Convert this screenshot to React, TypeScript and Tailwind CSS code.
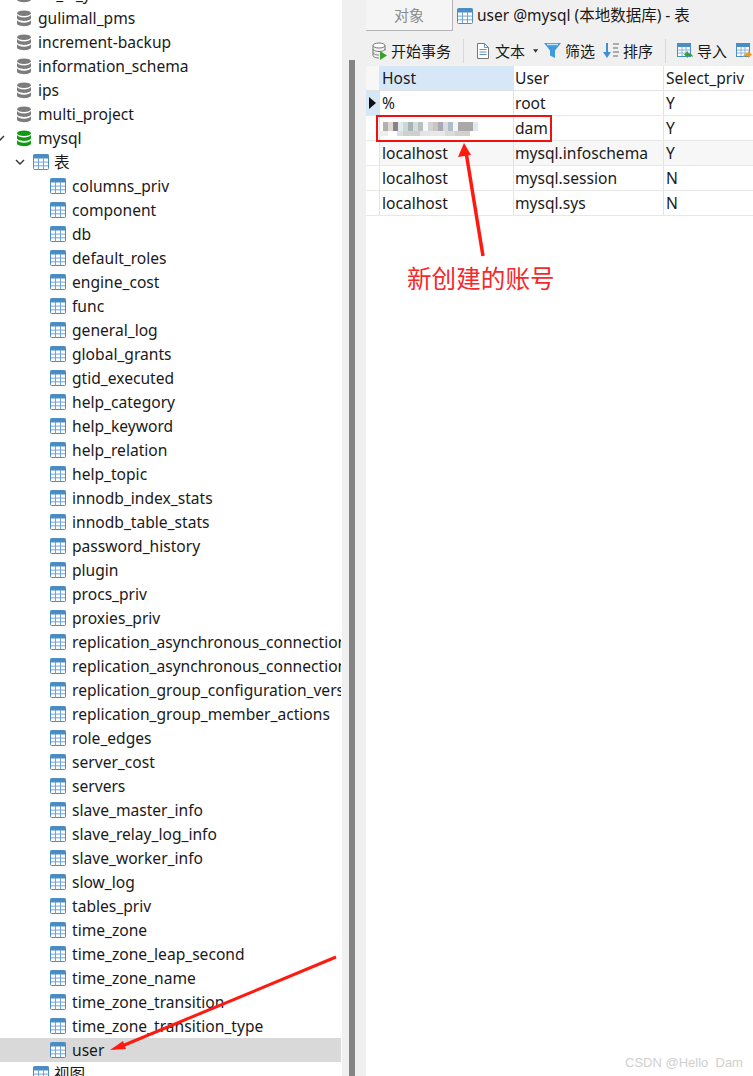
const font = { fontFamily: '"Noto Sans", "Noto Sans CJK SC", sans-serif' };

function Db({ green = false }: { green?: boolean }) {
  const c = green ? "#129a12" : "#7c7c7c";
  return (
    <svg width="16" height="17" viewBox="0 0 16 17" className="shrink-0">
      <ellipse cx="8" cy="3.200" rx="7" ry="2.800" fill={c} />
      <path d="M1 5c1 1.700 3.600 2.400 7 2.400s6-.7 7-2.400v3.300c0 1.500-3 2.600-7 2.600S1 9.800 1 8.300z" fill={c} />
      <path d="M1 10.300c1 1.700 3.600 2.400 7 2.400s6-.7 7-2.400v3.300c0 1.500-3 2.600-7 2.600s-7-1.100-7-2.600z" fill={c} />
    </svg>
  );
}

function Tbl({ size = 16 }: { size?: number }) {
  return (
    <svg width={size} height={size} viewBox="0 0 16 16" className="shrink-0">
      <rect x="0.500" y="0.500" width="15" height="15" rx="1" fill="#fff" stroke="#4a8cc4" />
      <rect x="0.500" y="0.500" width="15" height="4" fill="#4a8cc4" />
      <path d="M5.500 4v11.500M10.500 4v11.500M1 8.100h14M1 11.800h14" stroke="#6fa5d2" strokeWidth="1" fill="none" />
    </svg>
  );
}

function Chevron() {
  return (
    <svg width="10" height="7" viewBox="0 0 10 7" className="shrink-0">
      <path d="M1 1l4 4 4-4" stroke="#333" strokeWidth="1.400" fill="none" />
    </svg>
  );
}

const dbs = ["gulimall_pms", "increment-backup", "information_schema", "ips", "multi_project"];
const tables = [
  "columns_priv", "component", "db", "default_roles", "engine_cost", "func", "general_log", "global_grants",
  "gtid_executed", "help_category", "help_keyword", "help_relation", "help_topic", "innodb_index_stats",
  "innodb_table_stats", "password_history", "plugin", "procs_priv", "proxies_priv",
  "replication_asynchronous_connection_failover", "replication_asynchronous_connection_failover_managed",
  "replication_group_configuration_version", "replication_group_member_actions", "role_edges", "server_cost",
  "servers", "slave_master_info", "slave_relay_log_info", "slave_worker_info", "slow_log", "tables_priv",
  "time_zone", "time_zone_leap_second", "time_zone_name", "time_zone_transition", "time_zone_transition_type",
];

const rows = [
  { host: "%", user: "root", priv: "Y", bg: "bg-white" },
  { host: "", user: "dam", priv: "Y", bg: "bg-white" },
  { host: "localhost", user: "mysql.infoschema", priv: "Y", bg: "bg-[#f7f7f7]" },
  { host: "localhost", user: "mysql.session", priv: "N", bg: "bg-white" },
  { host: "localhost", user: "mysql.sys", priv: "N", bg: "bg-white" },
];

const mosaicTop = [
  [383, "#b0b4b0", 5], [388, "#e2d8d2", 5], [393, "#8c8088", 5], [398, "#e0ecec", 5], [403, "#c8d8d8", 5],
  [408, "#a8b4b4", 5], [413, "#d4dcdc", 5], [418, "#b8c0c0", 5], [423, "#f8f8f4", 5], [428, "#d0d4d8", 5],
  [433, "#cfc4b8", 5], [438, "#a8a8b8", 5], [443, "#d8dcdc", 5], [448, "#b0bcc8", 5], [453, "#f4f4f4", 5],
  [458, "#aaa8a8", 15], [473, "#dde8f2", 5],
] as [number, string, number][];
const mosaicBottom = [
  [378, "#eeeeee", 10], [397, "#dddddd", 6], [403, "#cfcfcf", 17], [420, "#e4e4e8", 10],
  [430, "#e8e8e8", 15], [445, "#d8dcd8", 10], [455, "#d0d0d0", 15],
] as [number, string, number][];

function Tool({ label, icon, className = "" }: { label: string; icon: React.ReactNode; className?: string }) {
  return (
    <div className={`flex items-center ${className}`}>
      {icon}
      <span className="pt-[2px] text-[15px] text-[#1a1a1a] whitespace-nowrap">{label}</span>
    </div>
  );
}

export default function App() {
  return (
    <div className="relative flex h-[1076px] w-[753px] overflow-hidden bg-white" style={font}>
      {/* tree */}
      <div className="h-full w-[341px] shrink-0 overflow-hidden bg-white text-[15.6px] text-[#1a1a1a]">
        <div className="-mt-[18px]">
          <div className="flex h-6 items-center gap-[6px] pl-[16px]">
            <Db />
            <span className="pt-[2px]">oa_ai_y</span>
          </div>
          {dbs.map((d) => (
            <div key={d} className="flex h-6 items-center gap-[6px] pl-[16px]">
              <Db />
              <span className="pt-[2px]">{d}</span>
            </div>
          ))}
          <div className="flex h-6 items-center pl-0">
            <div className="-ml-[5px] w-[21px]"><Chevron /></div>
            <div className="mr-[6px]"><Db green /></div>
            <span className="pt-[2px]">mysql</span>
          </div>
          <div className="flex h-6 items-center pl-[15px]">
            <div className="w-[18px]"><Chevron /></div>
            <Tbl />
            <span className="ml-[5px] pt-[2px]">表</span>
          </div>
          {tables.map((t) => (
            <div key={t} className="flex h-6 items-center pl-[50px]">
              <Tbl />
              <span className="ml-[6px] pt-[2px] whitespace-nowrap">{t}</span>
            </div>
          ))}
          <div className="flex h-6 items-center bg-[#d9d9d9] pl-[50px]">
            <Tbl />
            <span className="ml-[6px] pt-[2px]">user</span>
          </div>
          <div className="flex h-6 items-center pl-[33px]">
            <Tbl />
            <span className="ml-[5px] pt-[2px]">视图</span>
          </div>
        </div>
      </div>

      {/* splitter */}
      <div className="h-full w-[25px] shrink-0 border-l border-white bg-[#f0f0f0] pl-[7px] pt-[60px]">
        <div className="h-full w-[6px] bg-[#858585]" />
      </div>

      {/* main */}
      <div className="flex h-full min-w-0 flex-1 flex-col bg-white">
        <div className="flex h-[33px] shrink-0 bg-[#f0f0f0]">
          <div className="flex h-[31px] w-[87px] items-center justify-center border-r border-b border-[#b5b5b5] bg-[#f5f5f5] text-[15px] text-[#8c8c8c]">
            对象
          </div>
          <div className="flex h-[31px] items-center pl-[4px] text-[15.5px] text-[#1a1a1a] whitespace-nowrap">
            <Tbl />
            <span className="ml-[4px]">user @mysql (本地数据库) - 表</span>
          </div>
        </div>
        <div className="flex h-[33px] shrink-0 items-center bg-[#f0f0f0] pl-[6px] pt-[2px] whitespace-nowrap">
          <Tool
            className="gap-[3px]"
            label="开始事务"
            icon={
              <svg width="16" height="18" viewBox="0 0 16 18">
                <ellipse cx="7" cy="3.500" rx="6" ry="2.500" fill="#fff" stroke="#777" />
                <path d="M1 3.500v10c0 1.400 2.700 2.500 6 2.500M13 3.500v5M1 7c0 1.400 2.700 2.500 6 2.500s6-1.100 6-2.500M1 10.500c0 1.400 2.700 2.500 6 2.500" fill="none" stroke="#777" />
                <path d="M8 9l7 4.500L8 18z" fill="#3aa02c" />
              </svg>
            }
          />
          <div className="ml-[12px] h-[24px] w-px bg-[#d8d8d8]" />
          <Tool
            className="ml-[12px] gap-[5px]"
            label="文本"
            icon={
              <svg width="14" height="16" viewBox="0 0 14 16">
                <path d="M1.500.500h7l4 4v11h-11z" fill="#fff" stroke="#777" />
                <path d="M8.500.500v4h4M3.500 6.500h7M3.500 9h7M3.500 11.500h7" fill="none" stroke="#5b95cc" />
              </svg>
            }
          />
          <svg width="6" height="4" viewBox="0 0 6 4" className="ml-[8px]"><path d="M0 0h6L3 4z" fill="#333" /></svg>
          <Tool
            className="ml-[6px] gap-[4px]"
            label="筛选"
            icon={
              <svg width="17" height="17" viewBox="0 0 17 17">
                <path d="M0 1h17l-6 7.500V16l-5-2.500v-5z" fill="#3f9bdc" />
                <path d="M3 2.500h11" stroke="#bfe0f5" strokeWidth="1.500" />
              </svg>
            }
          />
          <Tool
            className="ml-[8px] gap-[4px]"
            label="排序"
            icon={
              <svg width="16" height="17" viewBox="0 0 16 17">
                <path d="M4 1v11" stroke="#3f8fd6" strokeWidth="2" />
                <path d="M0 10h8l-4 6z" fill="#3f8fd6" />
                <path d="M10 2h6M10 6h5M10 10h6M10 14h5" stroke="#666" strokeWidth="1" />
              </svg>
            }
          />
          <div className="ml-[12px] h-[24px] w-px bg-[#d8d8d8]" />
          <Tool
            className="ml-[11px] gap-[3px]"
            label="导入"
            icon={
              <svg width="17" height="16" viewBox="0 0 17 16">
                <rect x="0.500" y="0.500" width="13" height="13" fill="#fff" stroke="#4a8cc4" />
                <rect x="0.500" y="0.500" width="13" height="3.500" fill="#4a8cc4" />
                <path d="M5 4v9M9 4v9M1 7h12M1 10h12" stroke="#8ab6da" />
                <path d="M16 14c-.5-3-3-4-5-4V8l-4 3.500 4 3.500v-2c2 0 4 0 5 1z" fill="#35a035" />
              </svg>
            }
          />
          <div className="ml-[9px] shrink-0">
            <svg width="17" height="16" viewBox="0 0 17 16">
              <rect x="0.500" y="0.500" width="13" height="13" fill="#fff" stroke="#4a8cc4" />
              <rect x="0.500" y="0.500" width="13" height="3.500" fill="#4a8cc4" />
              <path d="M5 4v9M9 4v9M1 7h12M1 10h12" stroke="#8ab6da" />
              <path d="M7 14c.5-3 3-4 5-4V8l4 3.500-4 3.500v-2c-2 0-4 0-5 1z" fill="#f09a20" />
            </svg>
          </div>
        </div>

        {/* grid */}
        <div className="text-[15.6px] text-[#1a1a1a]">
          <div className="flex h-[25px] border-b border-[#e3e3e3]">
            <div className="w-[14px] shrink-0 border-r border-[#e3e3e3] bg-[#f7f7f7]" />
            <div className="flex w-[134px] shrink-0 items-center border-r border-[#e3e3e3] bg-[#d6e8f7] pl-[2px] pt-[2px]">Host</div>
            <div className="flex w-[150px] shrink-0 items-center border-r border-[#e3e3e3] bg-white pl-[1px] pt-[2px]">User</div>
            <div className="flex flex-1 items-center bg-white pl-[2px] pt-[2px]">Select_priv</div>
          </div>
          {rows.map((r, i) => (
            <div key={i} className={`flex h-[25px] border-b border-[#e8e8e8] ${r.bg}`}>
              <div className={`flex w-[14px] shrink-0 items-center justify-center border-r border-[#e3e3e3] ${i === 0 ? "bg-[#d6e8f7]" : "bg-white"}`}>
                {i === 0 && <svg width="7" height="12" viewBox="0 0 7 12"><path d="M0 0l7 6-7 6z" fill="#111" /></svg>}
              </div>
              <div className="flex w-[134px] shrink-0 items-center border-r border-[#e3e3e3] pl-[2px] pt-[2px]">{r.host}</div>
              <div className="flex w-[150px] shrink-0 items-center border-r border-[#e3e3e3] pl-[1px] pt-[2px]">{r.user}</div>
              <div className="flex flex-1 items-center pl-[2px] pt-[2px]">{r.priv}</div>
            </div>
          ))}
        </div>
      </div>

      {/* annotations */}
      {mosaicTop.map(([x, c, w], i) => (
        <div key={i} className="absolute top-[122px] h-[9px] blur-[0.4px]" style={{ left: x, width: w, backgroundColor: c }} />
      ))}
      {mosaicBottom.map(([x, c, w], i) => (
        <div key={i} className="absolute top-[131px] h-[5px] blur-[0.4px]" style={{ left: x, width: w, backgroundColor: c }} />
      ))}
      <div className="absolute left-[376px] top-[115px] h-[27px] w-[176px] border-2 border-[#f01010]" />
      <svg width="753" height="1076" viewBox="0 0 753 1076" className="pointer-events-none absolute left-0 top-0">
        <path d="M483 256L466 152" stroke="#ff1a10" strokeWidth="3.500" fill="none" />
        <path d="M464 143l-6 14 13-2z" fill="#ff1a10" />
        <path d="M336 957L122 1046" stroke="#ff1a10" strokeWidth="3" fill="none" />
        <path d="M110 1050l13-9 3 8z" fill="#ff1a10" />
      </svg>
      <div className="absolute left-[407px] top-[260px] text-[24.6px] leading-[34px] text-[#f5282a]" style={{ fontFamily: '"Noto Sans CJK SC", sans-serif' }}>
        新创建的账号
      </div>
      <div className="absolute left-[625px] top-[1054px] text-[13px] leading-[18px] font-light text-[#cfcfcf] whitespace-nowrap" style={{ fontFamily: '"Liberation Sans", sans-serif' }}>
        CSDN @Hello&nbsp; Dam
      </div>
    </div>
  );
}
